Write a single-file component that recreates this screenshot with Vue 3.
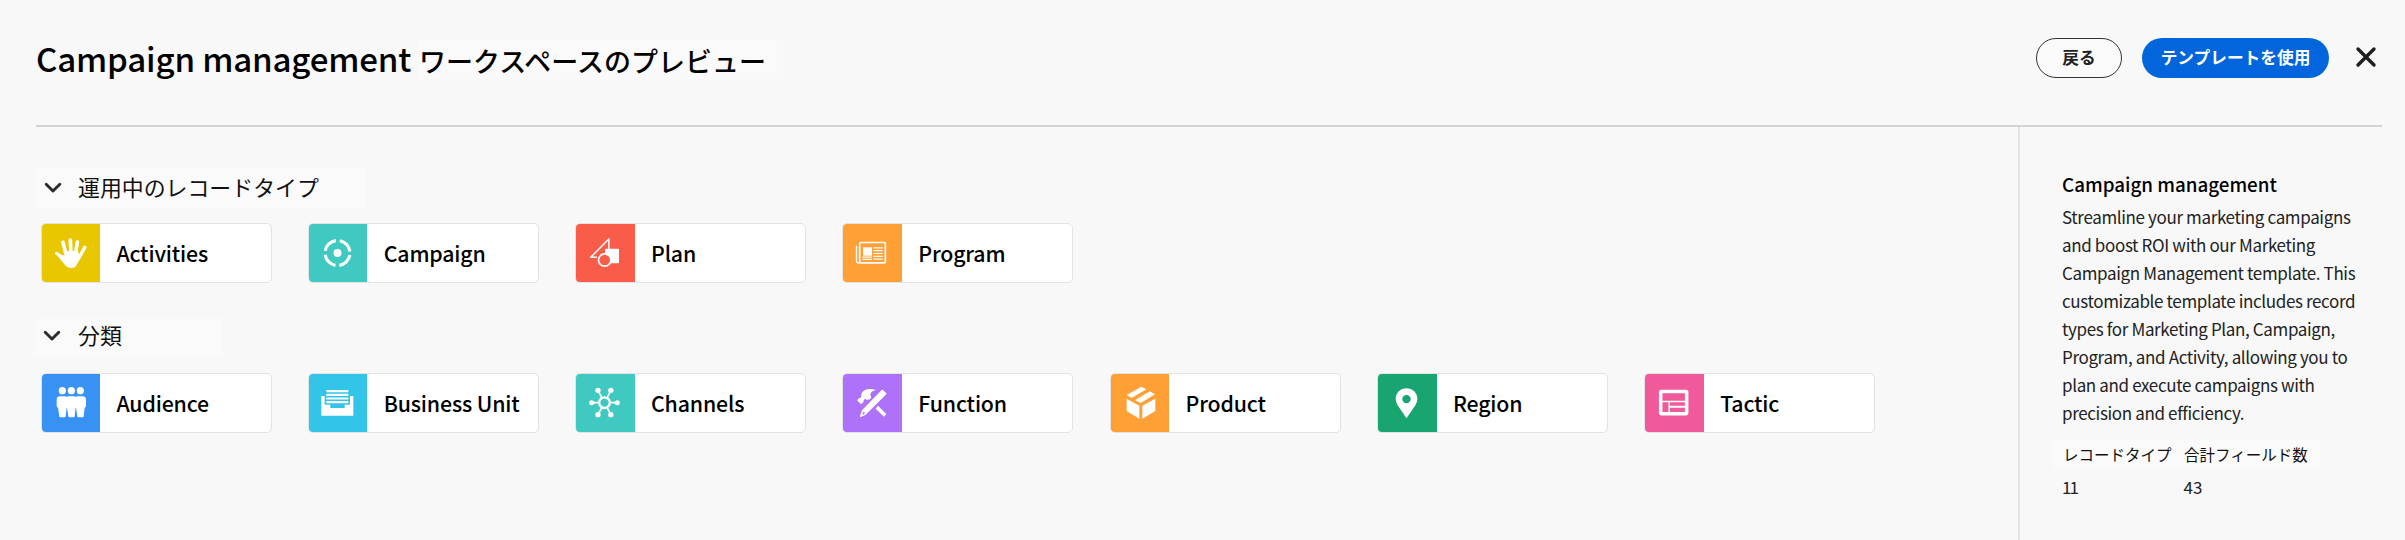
<script setup>
const sections = [
  {
    id: 'operational',
    title: '運用中のレコードタイプ',
    cards: [
      { name: 'Activities', icon: 'hand', color: '#e8c600' },
      { name: 'Campaign', icon: 'target', color: '#40c9c1' },
      { name: 'Plan', icon: 'shapes', color: '#f95c48' },
      { name: 'Program', icon: 'news', color: '#ffa037' }
    ]
  },
  {
    id: 'taxonomy',
    title: '分類',
    cards: [
      { name: 'Audience', icon: 'people', color: '#3892f3' },
      { name: 'Business Unit', icon: 'tray', color: '#33c5e8' },
      { name: 'Channels', icon: 'hub', color: '#40c9c1' },
      { name: 'Function', icon: 'tools', color: '#ae72f9' },
      { name: 'Product', icon: 'box', color: '#ffa037' },
      { name: 'Region', icon: 'pin', color: '#18a56f' },
      { name: 'Tactic', icon: 'layout', color: '#f05a9a' }
    ]
  }
]

const description = [
  'Streamline your marketing campaigns',
  'and boost ROI with our Marketing',
  'Campaign Management template. This',
  'customizable template includes record',
  'types for Marketing Plan, Campaign,',
  'Program, and Activity, allowing you to',
  'plan and execute campaigns with',
  'precision and efficiency.'
]
</script>

<template>
  <div class="page">
    <header class="header">
      <h1 class="title">
        <span class="title-name">Campaign management</span>
        <span class="title-suffix">ワークスペースのプレビュー</span>
      </h1>
      <div class="actions">
        <button class="btn back">戻る</button>
        <button class="btn primary">テンプレートを使用</button>
        <svg class="close" viewBox="0 0 22 22">
          <path d="M3 3L19 19M19 3L3 19" fill="none" stroke="#1f1f1f" stroke-width="3.4" stroke-linecap="round" />
        </svg>
      </div>
    </header>

    <div class="body">
      <main class="main">
        <section v-for="s in sections" :key="s.id" :class="['section', s.id]">
          <div class="section-head">
            <svg class="chevron" viewBox="0 0 18 12">
              <path d="M2.2 2.2L9 9L15.8 2.2" fill="none" stroke="#2b2b2b" stroke-width="2.9" stroke-linecap="round" stroke-linejoin="round" />
            </svg>
            <h2>{{ s.title }}</h2>
          </div>
          <div class="cards">
            <div v-for="c in s.cards" :key="c.name" class="card">
              <div class="tile" :style="{ backgroundColor: c.color }">
                <svg class="icon" viewBox="3 3 174 174" fill="#fff" stroke="none">
                  <g v-if="c.icon === 'hand'">
                    <g fill="none" stroke="#fff" stroke-linecap="round">
                      <path stroke-width="9" d="M46.500 91L70 107" />
                      <path stroke-width="11" d="M66 58L76 98M88 51L90 95M109 57L103 98" />
                      <path stroke-width="10" d="M131.500 73L112 108" />
                    </g>
                    <path d="M71 84L110 84L118 104L107 126Q102 135 92 135Q80 135 74 128L50 99L56 94L72 98Z" />
                  </g>
                  <g v-else-if="c.icon === 'target'">
                    <circle cx="88.500" cy="90" r="37.500" fill="none" stroke="#fff" stroke-width="9.500" stroke-dasharray="46.9 12" stroke-dashoffset="-6" />
                    <circle cx="88.500" cy="90" r="12" />
                  </g>
                  <g v-else-if="c.icon === 'shapes'">
                    <path d="M66 103H47L101.500 48V79" fill="none" stroke="#fff" stroke-width="4.500" stroke-linejoin="round" />
                    <rect x="90" y="77" width="42" height="44" rx="3" />
                    <circle cx="89" cy="111" r="18.500" :fill="c.color" stroke="#fff" stroke-width="5" />
                  </g>
                  <g v-else-if="c.icon === 'news'">
                    <g fill="none" stroke="#fff">
                      <rect x="53" y="58.500" width="77" height="61" rx="3" stroke-width="5" />
                      <path d="M43.500 68V115Q43.500 119.500 48 119.500H56" stroke-width="4" />
                      <path d="M94 74.500H122M94 83H122M94 91.500H122M94 100H122M94 108.500H122M61 102.500H90M61 109H90" stroke-width="3.500" />
                    </g>
                    <rect x="63" y="73" width="27" height="25" />
                  </g>
                  <g v-else-if="c.icon === 'people'">
                    <g v-for="x in [0, 27, 54]" :key="x" :transform="`translate(${x} 0)`">
                      <circle cx="64" cy="53" r="10.800" />
                      <path d="M47 81Q47 70 57 70H71Q81 70 81 81V98Q81 103 77 104L74 130Q74 133 71 133H58Q55 133 55 130L51 104Q47 103 47 98Z" />
                    </g>
                  </g>
                  <g v-else-if="c.icon === 'tray'">
                    <path d="M55 54.500H121M55 65.500H121M55 76.500H121M55 87.500H121" stroke="#fff" stroke-width="6.500" />
                    <path d="M40 69H50V95H67V105H110V95H126V69H136V128H40Z" />
                  </g>
                  <g v-else-if="c.icon === 'hub'">
                    <g fill="none" stroke="#fff">
                      <circle cx="88.500" cy="89" r="16" stroke-width="7" />
                      <path d="M50 89H70M107 89H127M69 52L80 73M107.500 52L97 73M69 125L80 105M107.500 125L97 105" stroke-width="5" />
                    </g>
                    <circle cx="50" cy="89" r="7.500" /><circle cx="127" cy="89" r="7.500" />
                    <circle cx="69" cy="52" r="8" /><circle cx="107.500" cy="52" r="8" />
                    <circle cx="69" cy="125" r="8" /><circle cx="107.500" cy="125" r="8" />
                  </g>
                  <g v-else-if="c.icon === 'tools'">
                    <path d="M45.500 82L52 74Q55 76 57.500 72Q56 62 63 55Q76 43 102 51Q91 52 86 60Q83 67 88 73L83 80Q80 77 76 81Q72 80 69 77Q63 82 64 88L57 94Z" />
                    <path d="M108 98L133 123L126 131L101 107Z" />
                    <path d="M119 51Q121 49 123 51L133 61Q134 63 133 64L71 125L57 132Q53 133 54 129L60 112Z" />
                    <path d="M62 119L66 116L69 120L63 125Q60 124 62 119Z" :fill="c.color" />
                  </g>
                  <g v-else-if="c.icon === 'box'">
                    <path d="M50 66L94 41L109 49L65 75ZM75 82L119 55L135 64L92 90ZM50 77L88 98V137L50 114ZM97 98L136 77V114L97 137Z" />
                  </g>
                  <g v-else-if="c.icon === 'pin'">
                    <path d="M88.500 136L62 97Q56 88 56 78A32.500 32.500 0 0 1 121 78Q121 88 115 97Z" />
                    <circle cx="88.500" cy="78.500" r="12.500" :fill="c.color" />
                  </g>
                  <g v-else>
                    <g fill="none" stroke="#fff">
                      <rect x="50" y="55.500" width="78" height="66.500" rx="1" stroke-width="10.500" />
                      <path d="M54 85.500H124M75.500 85V118" stroke-width="4.500" />
                      <path d="M76 101.500H124" stroke-width="6" />
                    </g>
                  </g>
                </svg>
              </div>
              <span class="card-name">{{ c.name }}</span>
            </div>
          </div>
        </section>
      </main>

      <aside class="side">
        <h3>Campaign management</h3>
        <p>
          <span v-for="l in description" :key="l" class="line">{{ l }}</span>
        </p>
        <div class="labels">
          <span class="label-a">レコードタイプ</span>
          <span>合計フィールド数</span>
        </div>
        <div class="values">
          <span class="value-a">11</span>
          <span>43</span>
        </div>
      </aside>
    </div>
  </div>
</template>

<style>
body {
  background: #f8f8f8;
}
</style>

<style scoped>
.page {
  box-sizing: border-box;
  width: 2405px;
  height: 540px;
  padding: 0 23px 0 36px;
  overflow: hidden;
  background: #f8f8f8;
  color: #000;
  font-family: 'Noto Sans CJK JP', sans-serif;
  display: flex;
  flex-direction: column;
}
h1, h2, h3, p {
  margin: 0;
  font-weight: 400;
}
.header {
  box-sizing: border-box;
  height: 127px;
  flex: none;
  border-bottom: 2px solid #d3d3d3;
  display: flex;
  align-items: flex-start;
  justify-content: space-between;
}
.title {
  display: flex;
  padding-top: 40px;
  white-space: nowrap;
}
.title-name {
  width: 382px;
  font-size: 33.1px;
  line-height: 37px;
  font-weight: 500;
  letter-spacing: -0.17px;
}
.title-suffix {
  box-sizing: border-box;
  width: 365px;
  height: 39px;
  padding-left: 1px;
  background: #fafafa;
  font-size: 27px;
  line-height: 41px;
  font-weight: 500;
}
.actions {
  display: flex;
  align-items: center;
  padding-top: 38px;
}
.btn {
  box-sizing: border-box;
  height: 40px;
  padding: 0 0 3px;
  border-radius: 20px;
  font-family: inherit;
  font-size: 16.7px;
  line-height: 34px;
  font-weight: 700;
  white-space: nowrap;
}
.back {
  width: 86px;
  margin-right: 20px;
  border: 1.5px solid #333;
  background: #fafafa;
  color: #222;
}
.primary {
  width: 187px;
  margin-right: 26px;
  border: 0;
  background: #0265dc;
  color: #fff;
}
.close {
  width: 22px;
  height: 22px;
  margin-right: 5px;
  margin-bottom: 2px;
}
.body {
  flex: 1;
  display: flex;
}
.main {
  width: 1982px;
  flex: none;
}
.section-head {
  display: flex;
  align-items: center;
  background: #fafafa;
}
.operational .section-head {
  width: 330px;
  height: 41px;
  margin-top: 41px;
}
.taxonomy .section-head {
  width: 187px;
  height: 38px;
  margin: 35px 0 0 -1px;
}
.chevron {
  width: 18px;
  height: 12px;
  margin: 0 16px 1px 8px;
}
.taxonomy .chevron {
  margin-bottom: 2px;
  margin-right: 17px;
}
h2 {
  margin-bottom: 5px;
  font-size: 21.9px;
  line-height: 33px;
  color: #111;
  white-space: nowrap;
}
.taxonomy h2 {
  margin-bottom: 5px;
  line-height: 31px;
}
.cards {
  display: flex;
  gap: 36.3px;
  padding-left: 4.6px;
}
.operational .cards {
  margin-top: 14px;
}
.taxonomy .cards {
  margin-top: 17px;
}
.card {
  box-sizing: border-box;
  width: 231px;
  height: 60px;
  border: 1px solid #e3e3e3;
  border-radius: 5px;
  background: #fff;
  display: flex;
  align-items: center;
  overflow: hidden;
}
.tile {
  width: 58.5px;
  height: 58px;
  flex: none;
}
.icon {
  display: block;
  width: 58px;
  height: 58px;
}
.card-name {
  padding-left: 16.3px;
  font-size: 21.3px;
  line-height: 58px;
  font-weight: 500;
  letter-spacing: -0.15px;
  white-space: nowrap;
}
.side {
  width: 328px;
  box-sizing: border-box;
  padding: 40px 0 0 42px;
  border-left: 2px solid #e3e3e3;
  white-space: nowrap;
}
h3 {
  margin-bottom: 3px;
  font-size: 18.8px;
  line-height: 33px;
  font-weight: 500;
}
.line {
  display: block;
  font-size: 17px;
  line-height: 28px;
  letter-spacing: -0.36px;
  color: #222;
}
.labels {
  display: flex;
  width: 268px;
  height: 30px;
  margin: 12px 0 0 -9px;
  background: #fafafa;
  font-size: 15.5px;
  line-height: 31px;
  color: #111;
}
.label-a {
  width: 121px;
  box-sizing: border-box;
  padding-left: 10px;
  margin-right: 10px;
}
.values {
  display: flex;
  padding-top: 4px;
  font-size: 17px;
  line-height: 28px;
  color: #222;
}
.value-a {
  width: 121.5px;
  letter-spacing: -2px;
}
</style>
